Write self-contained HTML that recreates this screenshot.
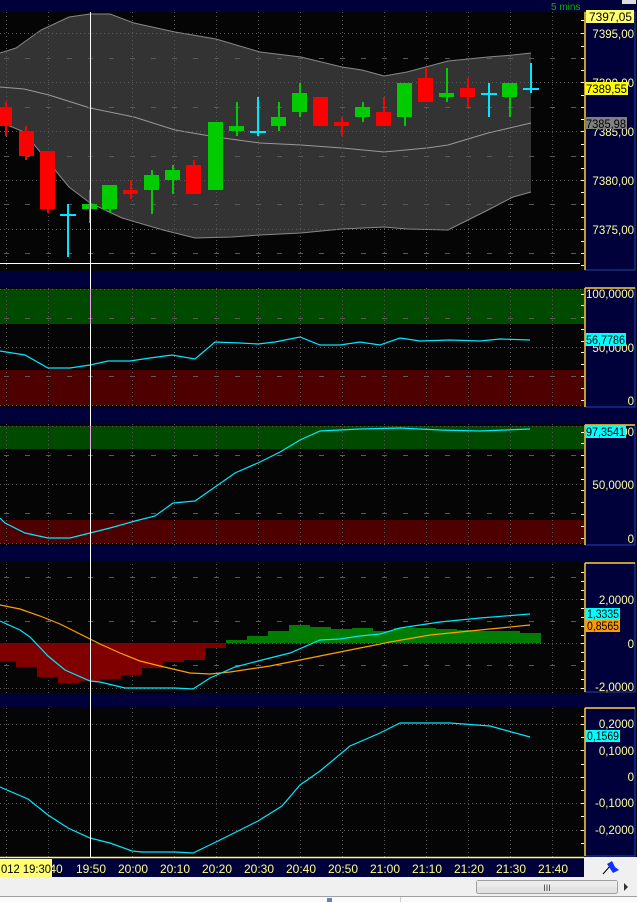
<!DOCTYPE html>
<html><head><meta charset="utf-8"><style>
html,body{margin:0;padding:0;background:#000;width:637px;height:902px;overflow:hidden}
svg{display:block}
text{font-family:"Liberation Sans",sans-serif}
</style></head><body>
<svg width="637" height="902" viewBox="0 0 637 902" xmlns="http://www.w3.org/2000/svg">
<defs>
<pattern id="vg" x="6" y="0" width="42" height="902" patternUnits="userSpaceOnUse">
<line x1="0.5" y1="0" x2="0.5" y2="902" stroke="#5a5a5a" stroke-dasharray="1,3"/>
</pattern>
</defs>
<rect width="637" height="902" fill="#050505"/>
<rect x="0" y="0" width="637" height="12" fill="#00003a"/>
<text x="551" y="10" font-size="10" fill="#00b400">5 mins</text>
<rect x="622" y="0" width="14" height="4" fill="#ddd"/>
<rect x="0" y="271" width="637" height="16" fill="#00003a"/>
<rect x="0" y="408" width="637" height="16" fill="#00003a"/>
<rect x="0" y="546" width="637" height="16" fill="#00003a"/>
<rect x="0" y="693" width="637" height="14" fill="#00003a"/>

<polygon fill="#333" points="0,53 16,48 41,30 69,17 90,14 110,14 134,23 175,32 216,39 260,52 301,57 342,67 362,70 384,76 407,72 448,61 488,57 513,55 531,53 531,192 513,197 488,210 448,230 407,229 384,227 342,229 301,233 260,235 232,237 195,238 163,230 122,218 90,203 69,187 41,153 24,132 0,122"/>
<polyline fill="none" stroke="#888" stroke-width="1" points="0,53 16,48 41,30 69,17 90,14 110,14 134,23 175,32 216,39 260,52 301,57 342,67 362,70 384,76 407,72 448,61 488,57 513,55 531,53"/>
<polyline fill="none" stroke="#888" stroke-width="1" points="531,192 513,197 488,210 448,230 407,229 384,227 342,229 301,233 260,235 232,237 195,238 163,230 122,218 90,203 69,187 41,153 24,132 0,122"/>
<polyline fill="none" stroke="#999" stroke-width="1" points="0,87 24,89 49,95 90,108 134,117 175,130 216,137 260,143 301,145 342,148 384,152 427,148 448,145 488,133 531,123"/>
<rect x="0" y="12" width="584" height="259" fill="url(#vg)"/>
<g stroke="#5a5a5a" stroke-dasharray="1,3">
<line x1="0" y1="33.5" x2="584" y2="33.5"/><line x1="0" y1="82.5" x2="584" y2="82.5"/>
<line x1="0" y1="131.5" x2="584" y2="131.5"/><line x1="0" y1="180.5" x2="584" y2="180.5"/>
<line x1="0" y1="229.5" x2="584" y2="229.5"/>
</g>
<g stroke="#5a5a5a" stroke-dasharray="5,16">
<line x1="4" y1="58.5" x2="584" y2="58.5"/><line x1="4" y1="107.5" x2="584" y2="107.5"/>
<line x1="4" y1="156.5" x2="584" y2="156.5"/><line x1="4" y1="204.5" x2="584" y2="204.5"/>
<line x1="4" y1="253.5" x2="584" y2="253.5"/>
</g>
<line x1="0" y1="263.5" x2="580" y2="263.5" stroke="#fff" stroke-width="1"/>
<g stroke-width="2">
<g fill="#f00" stroke="#f00">
<line x1="6" y1="102" x2="6" y2="136"/><rect x="0" y="107" width="12" height="19" stroke="none"/>
<line x1="26" y1="126" x2="26" y2="160"/><rect x="19" y="131" width="15" height="25" stroke="none"/>
<line x1="48" y1="151" x2="48" y2="213"/><rect x="40" y="151" width="15" height="58" stroke="none"/>
<line x1="131" y1="180" x2="131" y2="199"/><rect x="123" y="190" width="15" height="4" stroke="none"/>
<line x1="194" y1="160" x2="194" y2="194"/><rect x="186" y="165" width="15" height="29" stroke="none"/>
<rect x="313" y="97" width="15" height="29" stroke="none"/>
<line x1="342" y1="117" x2="342" y2="136"/><rect x="334" y="122" width="15" height="4" stroke="none"/>
<line x1="384" y1="97" x2="384" y2="126"/><rect x="376" y="112" width="15" height="14" stroke="none"/>
<line x1="426" y1="68" x2="426" y2="102"/><rect x="418" y="78" width="15" height="24" stroke="none"/>
<line x1="468" y1="78" x2="468" y2="107"/><rect x="460" y="88" width="15" height="9" stroke="none"/>
</g>
<g fill="#00cc00" stroke="#00cc00">
<line x1="90" y1="190" x2="90" y2="223"/><rect x="82" y="204" width="15" height="5" stroke="none"/>
<line x1="110" y1="185" x2="110" y2="213"/><rect x="102" y="185" width="15" height="24" stroke="none"/>
<line x1="152" y1="170" x2="152" y2="214"/><rect x="144" y="175" width="15" height="15" stroke="none"/>
<line x1="173" y1="165" x2="173" y2="194"/><rect x="165" y="170" width="15" height="10" stroke="none"/>
<rect x="208" y="122" width="15" height="68" stroke="none"/>
<line x1="237" y1="102" x2="237" y2="136"/><rect x="229" y="126" width="15" height="5" stroke="none"/>
<line x1="279" y1="102" x2="279" y2="131"/><rect x="271" y="117" width="15" height="9" stroke="none"/>
<line x1="300" y1="83" x2="300" y2="117"/><rect x="292" y="93" width="15" height="19" stroke="none"/>
<line x1="363" y1="102" x2="363" y2="122"/><rect x="355" y="107" width="15" height="10" stroke="none"/>
<line x1="405" y1="83" x2="405" y2="126"/><rect x="397" y="83" width="15" height="34" stroke="none"/>
<line x1="447" y1="68" x2="447" y2="102"/><rect x="439" y="93" width="15" height="4" stroke="none"/>
<line x1="510" y1="83" x2="510" y2="117"/><rect x="502" y="83" width="15" height="14" stroke="none"/>
</g>
<g stroke="#00e8ff">
<line x1="68" y1="204" x2="68" y2="257"/><line x1="60" y1="215" x2="76" y2="215"/>
<line x1="258" y1="97" x2="258" y2="136"/><line x1="250" y1="132" x2="266" y2="132"/>
<line x1="489" y1="83" x2="489" y2="117"/><line x1="481" y1="94" x2="497" y2="94"/>
<line x1="531" y1="63" x2="531" y2="93"/><line x1="523" y1="89" x2="539" y2="89"/>
</g>
</g>

<rect x="0" y="289" width="584" height="35" fill="#004a00"/>
<rect x="0" y="370" width="584" height="35" fill="#4e0000"/>
<rect x="0" y="287" width="584" height="121" fill="url(#vg)"/>
<g stroke="#5a5a5a" stroke-dasharray="1,3">
<line x1="0" y1="289.5" x2="584" y2="289.5"/><line x1="0" y1="347.5" x2="584" y2="347.5"/><line x1="0" y1="405.5" x2="584" y2="405.5"/>
</g>
<g stroke="#5a5a5a" stroke-dasharray="5,16"><line x1="4" y1="318.5" x2="584" y2="318.5"/><line x1="4" y1="376.5" x2="584" y2="376.5"/></g>
<polyline fill="none" stroke="#00e8ff" stroke-width="1.2" points="0,351 25,355 48,368 70,368 90,365 108,361 130,361 150,358 172,355 195,359 215,342 240,343 258,344 275,342 300,337 320,345 340,345 360,342 380,345 400,338 420,341 450,340 480,341 500,339 530,340"/>

<rect x="0" y="426" width="584" height="23" fill="#004a00"/>
<rect x="0" y="520" width="584" height="23" fill="#4e0000"/>
<rect x="0" y="424" width="584" height="122" fill="url(#vg)"/>
<g stroke="#5a5a5a" stroke-dasharray="1,3">
<line x1="0" y1="426.5" x2="584" y2="426.5"/><line x1="0" y1="484.5" x2="584" y2="484.5"/><line x1="0" y1="543.5" x2="584" y2="543.5"/>
</g>
<g stroke="#5a5a5a" stroke-dasharray="5,16"><line x1="4" y1="455.5" x2="584" y2="455.5"/><line x1="4" y1="513.5" x2="584" y2="513.5"/></g>
<polyline fill="none" stroke="#00e8ff" stroke-width="1.2" points="0,518 5,523 25,533 48,538 70,538 90,533 110,528 135,521 155,516 173,503 195,501 215,487 235,473 260,462 280,452 300,440 320,431 340,430 360,429 400,428 440,430 480,431 530,429"/>

<rect x="0" y="562" width="584" height="131" fill="url(#vg)"/>
<g stroke="#5a5a5a" stroke-dasharray="1,3">
<line x1="0" y1="599.5" x2="584" y2="599.5"/><line x1="0" y1="643.5" x2="584" y2="643.5"/><line x1="0" y1="688.5" x2="584" y2="688.5"/>
</g>
<g stroke="#5a5a5a" stroke-dasharray="5,16"><line x1="4" y1="577.5" x2="584" y2="577.5"/><line x1="4" y1="621.5" x2="584" y2="621.5"/><line x1="4" y1="665.5" x2="584" y2="665.5"/></g>
<g fill="#800000">
<rect x="0" y="643" width="16" height="18"/><rect x="16" y="643" width="21" height="24"/>
<rect x="37" y="643" width="21" height="34"/><rect x="58" y="643" width="21" height="40"/>
<rect x="79" y="643" width="21" height="38"/><rect x="100" y="643" width="21" height="36"/>
<rect x="121" y="643" width="21" height="32"/><rect x="142" y="643" width="21" height="25"/>
<rect x="163" y="643" width="21" height="19"/><rect x="184" y="643" width="21" height="17"/>
<rect x="205" y="643" width="21" height="5"/>
</g>
<g fill="#007c00">
<rect x="226" y="640" width="21" height="3"/><rect x="247" y="636" width="21" height="7"/>
<rect x="268" y="631" width="21" height="12"/><rect x="289" y="625" width="21" height="18"/>
<rect x="310" y="627" width="21" height="16"/><rect x="331" y="629" width="21" height="14"/>
<rect x="352" y="628" width="21" height="15"/><rect x="373" y="631" width="21" height="12"/>
<rect x="394" y="628" width="21" height="15"/><rect x="415" y="628" width="21" height="15"/>
<rect x="436" y="629" width="21" height="14"/><rect x="457" y="630" width="21" height="13"/>
<rect x="478" y="631" width="21" height="12"/><rect x="499" y="631" width="21" height="12"/>
<rect x="520" y="633" width="21" height="10"/>
</g>
<polyline fill="none" stroke="#ffa000" stroke-width="1.2" points="0,605 20,609 40,616 60,624 80,634 100,644 120,653 140,661 160,666 190,673 210,674 230,672 270,666 310,658 350,650 390,642 430,635 470,631 530,625"/>
<polyline fill="none" stroke="#00e8ff" stroke-width="1.2" points="0,621 20,630 30,637 48,656 65,670 90,681 100,682 125,688 140,688 175,688 193,689 210,678 235,667 262,660 290,653 320,640 340,639 360,636 380,634 400,628 440,622 480,618 530,614"/>

<rect x="0" y="707" width="584" height="150" fill="url(#vg)"/>
<g stroke="#5a5a5a" stroke-dasharray="1,3">
<line x1="0" y1="724.5" x2="584" y2="724.5"/><line x1="0" y1="750.5" x2="584" y2="750.5"/><line x1="0" y1="777.5" x2="584" y2="777.5"/><line x1="0" y1="803.5" x2="584" y2="803.5"/><line x1="0" y1="830.5" x2="584" y2="830.5"/>
</g>
<polyline fill="none" stroke="#00e8ff" stroke-width="1.2" points="0,787 28,799 48,815 68,828 90,838 110,843 132,851 142,852 175,852 193,853 216,842 258,821 282,806 300,785 320,771 350,746 380,733 400,723 425,723 450,723 490,726 530,737"/>

<line x1="90.5" y1="12" x2="90.5" y2="857" stroke="#fff" stroke-width="1"/>
<line x1="90.5" y1="289" x2="90.5" y2="324" stroke="#f0a0f0"/>
<line x1="90.5" y1="426" x2="90.5" y2="449" stroke="#f0a0f0"/>

<g fill="#00003a" stroke="#2040c0">
<rect x="585" y="12" width="50" height="258"/>
<rect x="585" y="288" width="50" height="119"/>
<rect x="585" y="425" width="50" height="120"/>
<rect x="585" y="563" width="50" height="129"/>
<rect x="585" y="708" width="50" height="148"/>
</g>
<g stroke="#ffd040" stroke-width="1.5">
<line x1="585" y1="12" x2="585" y2="270"/><line x1="585" y1="288" x2="585" y2="407"/><line x1="585" y1="425" x2="585" y2="545"/><line x1="585" y1="563" x2="585" y2="692"/><line x1="585" y1="708" x2="585" y2="856"/>
<line x1="585" y1="288" x2="635" y2="288"/><line x1="585" y1="425" x2="635" y2="425"/><line x1="585" y1="563" x2="635" y2="563"/><line x1="585" y1="708" x2="635" y2="708"/>
</g>
<g stroke="#fff" stroke-width="1">
<path d="M581 20.5h3M581 33.5h3M581 46.5h3M581 58.5h3M581 70.5h3M581 82.5h3M581 95.5h3M581 107.5h3M581 119.5h3M581 131.5h3M581 144.5h3M581 156.5h3M581 168.5h3M581 180.5h3M581 192.5h3M581 204.5h3M581 217.5h3M581 229.5h3M581 241.5h3M581 253.5h3M581 265.5h3"/>
<path d="M581 294.5h3M581 305.5h3M581 317.5h3M581 329.5h3M581 341.5h3M581 352.5h3M581 364.5h3M581 376.5h3M581 388.5h3M581 400.5h3"/>
<path d="M581 432.5h3M581 443.5h3M581 455.5h3M581 467.5h3M581 479.5h3M581 490.5h3M581 502.5h3M581 514.5h3M581 526.5h3M581 538.5h3"/>
<path d="M581 572.5h3M581 581.5h3M581 590.5h3M581 599.5h3M581 608.5h3M581 617.5h3M581 626.5h3M581 635.5h3M581 643.5h3M581 652.5h3M581 661.5h3M581 670.5h3M581 679.5h3M581 688.5h3"/>
<path d="M581 716.5h3M581 724.5h3M581 737.5h3M581 750.5h3M581 764.5h3M581 777.5h3M581 790.5h3M581 803.5h3M581 816.5h3M581 830.5h3M581 843.5h3"/>
</g>
<g font-size="11.5" fill="#ffffa0" text-anchor="end">
<text x="634" y="38">7395,00</text>
<text x="634" y="87">7390,00</text>
<text x="634" y="136">7385,00</text>
<text x="634" y="185">7380,00</text>
<text x="634" y="234">7375,00</text>
<text x="634" y="298">100,0000</text>
<text x="634" y="352">50,0000</text>
<text x="634" y="405">0</text>
<text x="634" y="436">100,0000</text>
<text x="634" y="489">50,0000</text>
<text x="634" y="543">0</text>
<text x="634" y="604">2,0000</text>
<text x="634" y="648">0</text>
<text x="634" y="691">-2,0000</text>
<text x="634" y="728">0,2000</text>
<text x="634" y="755">0,1000</text>
<text x="634" y="781">0</text>
<text x="634" y="807">-0,1000</text>
<text x="634" y="834">-0,2000</text>
</g>
<g font-size="11.5" fill="#000" lengthAdjust="spacingAndGlyphs">
<rect x="586" y="10" width="48" height="13" fill="#ffff70"/><text x="589" y="21" textLength="43" lengthAdjust="spacingAndGlyphs">7397,05</text>
<rect x="585" y="82" width="43" height="13" fill="#ffff00"/><text x="586" y="93" textLength="41" lengthAdjust="spacingAndGlyphs">7389,55</text>
<rect x="585" y="117" width="42" height="12" fill="#808080"/><text x="586" y="128" textLength="40" lengthAdjust="spacingAndGlyphs">7385,98</text>
<rect x="585" y="333" width="41" height="13" fill="#00ffff"/><text x="586" y="344" textLength="39" lengthAdjust="spacingAndGlyphs">56,7786</text>
<rect x="585" y="425" width="41" height="13" fill="#00ffff"/><text x="586" y="436" textLength="39" lengthAdjust="spacingAndGlyphs">97,3541</text>
<rect x="585" y="608" width="35" height="12" fill="#00ffff"/><text x="587" y="618" textLength="32" lengthAdjust="spacingAndGlyphs">1,3335</text>
<rect x="585" y="620" width="35" height="12" fill="#ff9a00"/><text x="587" y="630" textLength="32" lengthAdjust="spacingAndGlyphs">0,8565</text>
<rect x="585" y="730" width="35" height="12" fill="#00ffff"/><text x="587" y="740" textLength="32" lengthAdjust="spacingAndGlyphs">0,1569</text>
</g>

<rect x="0" y="857" width="584" height="20" fill="#00003a"/>
<line x1="0" y1="857.5" x2="584" y2="857.5" stroke="#ffff60" stroke-width="1.5"/>
<g font-size="12" fill="#ffff80" text-anchor="middle">
<text x="56" y="873">40</text><text x="91" y="873">19:50</text><text x="133" y="873">20:00</text><text x="175" y="873">20:10</text>
<text x="217" y="873">20:20</text><text x="259" y="873">20:30</text><text x="301" y="873">20:40</text><text x="343" y="873">20:50</text>
<text x="385" y="873">21:00</text><text x="427" y="873">21:10</text><text x="469" y="873">21:20</text><text x="511" y="873">21:30</text><text x="553" y="873">21:40</text>
</g>
<rect x="0" y="859" width="52" height="18" fill="#ffff70"/>
<text x="1" y="873" font-size="12" fill="#000" textLength="50" lengthAdjust="spacingAndGlyphs">012 19:30</text>
<rect x="584" y="857" width="53" height="20" fill="#f0f0f0"/>
<path d="M603 874 L611 865" stroke="#000" stroke-width="1"/>
<path d="M607 864 L612 861 L615 867 L619 870 L613 873 Z" fill="#1030ff"/>
<rect x="0" y="877" width="637" height="19" fill="#f0f0f0"/>
<rect x="476.5" y="880.5" width="141" height="13" rx="2" fill="#e2e2e2" stroke="#a0a0a0"/>
<rect x="477" y="881" width="140" height="6" fill="#ececec"/>
<text x="547" y="891" font-size="9" fill="#444" text-anchor="middle">III</text>
<path d="M624 883 L628 887 L624 891 Z" fill="#333"/>
<rect x="0" y="896" width="637" height="6" fill="#fafafa"/>
<line x1="0" y1="896.5" x2="637" y2="896.5" stroke="#a0a0a0"/>
<line x1="400.5" y1="897" x2="400.5" y2="902" stroke="#ccc"/>
<rect x="327" y="898" width="5" height="4" fill="#6080c0"/>
</svg>
</body></html>
